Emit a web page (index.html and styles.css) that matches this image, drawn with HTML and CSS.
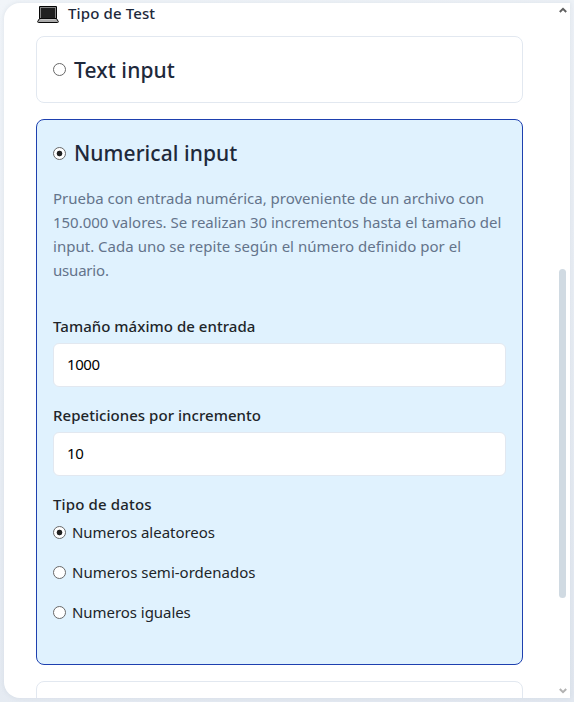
FILE: index.html
```html
<!DOCTYPE html>
<html lang="es">
<head>
<meta charset="utf-8">
<title>Tipo de Test</title>
<link rel="stylesheet" href="styles.css">
</head>
<body>
<main class="panel">
  <div class="content">
    <h2 class="section-title">
      <svg class="laptop" width="22" height="18" viewBox="0 0 22 18">
        <rect x="2" y="0" width="18" height="14" rx="1" fill="#050505"/>
        <rect x="3" y="1" width="16" height="12" fill="#858585"/>
        <rect x="4" y="2" width="14" height="10.5" fill="#202020"/>
        <path d="M2.5 12.5h17l1.8 3q.2 1-.8 1H1.500q-1 0-.8-1z" fill="#aaa" stroke="#080808"/>
        <path d="M3.500 13.500h15" stroke="#ccc" stroke-width=".7"/>
      </svg>
      <span class="title-text">Tipo de Test</span>
    </h2>
    <section class="card">
      <label class="heading"><input type="radio" name="test"><span class="h-text">Text input</span></label>
    </section>
    <section class="card selected">
      <label class="heading"><input type="radio" name="test" checked><span class="h-num">Numerical input</span></label>
      <p class="description"><span>Prueba con entrada numérica, proveniente de un archivo con</span><br><span class="line-2">150.000 valores. Se realizan 30 incrementos hasta el tamaño del</span><br><span class="line-3">input. Cada uno se repite según el número definido por el</span><br><span class="line-4">usuario.</span></p>
      <div class="field">
        <label class="label" for="size">Tamaño máximo de entrada</label>
        <input class="text-box" id="size" type="text" value="1000">
      </div>
      <div class="field">
        <label class="label" for="reps">Repeticiones por incremento</label>
        <input class="text-box" id="reps" type="text" value="10">
      </div>
      <div class="label l-data">Tipo de datos</div>
      <div class="options">
        <label class="option"><input type="radio" name="data" checked><span class="o-1">Numeros aleatoreos</span></label>
        <label class="option"><input type="radio" name="data"><span>Numeros semi-ordenados</span></label>
        <label class="option"><input type="radio" name="data"><span class="o-3">Numeros iguales</span></label>
      </div>
    </section>
    <section class="card"></section>
  </div>
  <div class="scrollbar">
    <svg width="8" height="6" viewBox="0 0 8 6"><path d="M.8 5 4 1.8 7.2 5" fill="none" stroke="#606060" stroke-width="2"/></svg>
    <div class="thumb"></div>
    <svg class="arrow-down" width="8" height="6" viewBox="0 0 8 6"><path d="M.8 1 4 4.2 7.2 1" fill="none" stroke="#b2b2b2" stroke-width="2"/></svg>
  </div>
</main>
</body>
</html>
```
FILE: styles.css
```css
* { box-sizing: border-box; }
body {
  margin: 0;
  height: 702px;
  padding: 3px 4px 4px;
  overflow: hidden;
  background: linear-gradient(160deg, #f1f5f9, #e2e8f0);
  color: #212529;
  font: 15px/24px "Noto Sans", sans-serif;
}
.panel {
  display: flex;
  justify-content: space-between;
  height: 695px;
  overflow: hidden;
  border-radius: 16px 0 0 16px;
  background: #fff;
  box-shadow: 0 0 5px rgba(148, 163, 184, .22);
}
.content { width: 519px; padding-left: 32px; white-space: nowrap; }
.section-title {
  display: flex;
  align-items: center;
  gap: 9px;
  height: 33px;
  margin: 0;
  padding: 0 0 13px 1px;
  color: #1e293b;
  font-size: 15px;
  font-weight: 500;
}
.title-text { letter-spacing: .13px; }
.laptop { margin-top: 4px; }
.card {
  height: 67px;
  margin-bottom: 16px;
  padding: 16px;
  border: 1px solid #e2e8f0;
  border-radius: 8px;
}
.card.selected {
  height: 546px;
  border-color: #1e40af;
  background: #e0f2fe;
}
input[type="radio"] {
  appearance: none;
  flex: none;
  width: 13px;
  height: 13px;
  margin: 0;
  border: 1.4px solid #686868;
  border-radius: 50%;
  background: #fff;
}
input[type="radio"]:checked { background: radial-gradient(circle, #212121 2.5px, #fff 3.2px); }
.heading {
  display: flex;
  align-items: center;
  gap: 8px;
  height: 33px;
  color: #1e293b;
  font-size: 21px;
  font-weight: 500;
}
.selected .heading input { margin-top: 2px; }
.h-text { letter-spacing: .1px; }
.h-num { letter-spacing: .06px; }
.description { margin: 17px 0 32px; color: #64748b; }
.line-2 { letter-spacing: -.02px; }
.line-3 { letter-spacing: .02px; }
.line-4 { letter-spacing: -.2px; }
.field { height: 89px; }
.label { display: block; font-weight: 500; letter-spacing: .04px; }
.l-data { letter-spacing: .15px; }
.text-box {
  display: block;
  width: 453px;
  height: 44px;
  margin-top: 5px;
  padding: 0 13px 2px;
  border: 1px solid #e2e8f0;
  border-radius: 6px;
  background: #fff;
  color: #000;
  font: inherit;
  letter-spacing: -.4px;
}
.options { display: grid; gap: 16px; margin-top: 4px; }
.option { display: flex; align-items: center; gap: 6px; height: 24px; }
.o-1 { letter-spacing: -.03px; }
.o-3 { letter-spacing: -.05px; }
.scrollbar {
  display: flex;
  flex-direction: column;
  align-items: center;
  width: 15px;
  padding: 4px 0 4px;
}
.thumb {
  width: 7px;
  height: 329px;
  margin: 256px 0 auto;
  border-radius: 4px;
  background: #d0dae2;
}
```
